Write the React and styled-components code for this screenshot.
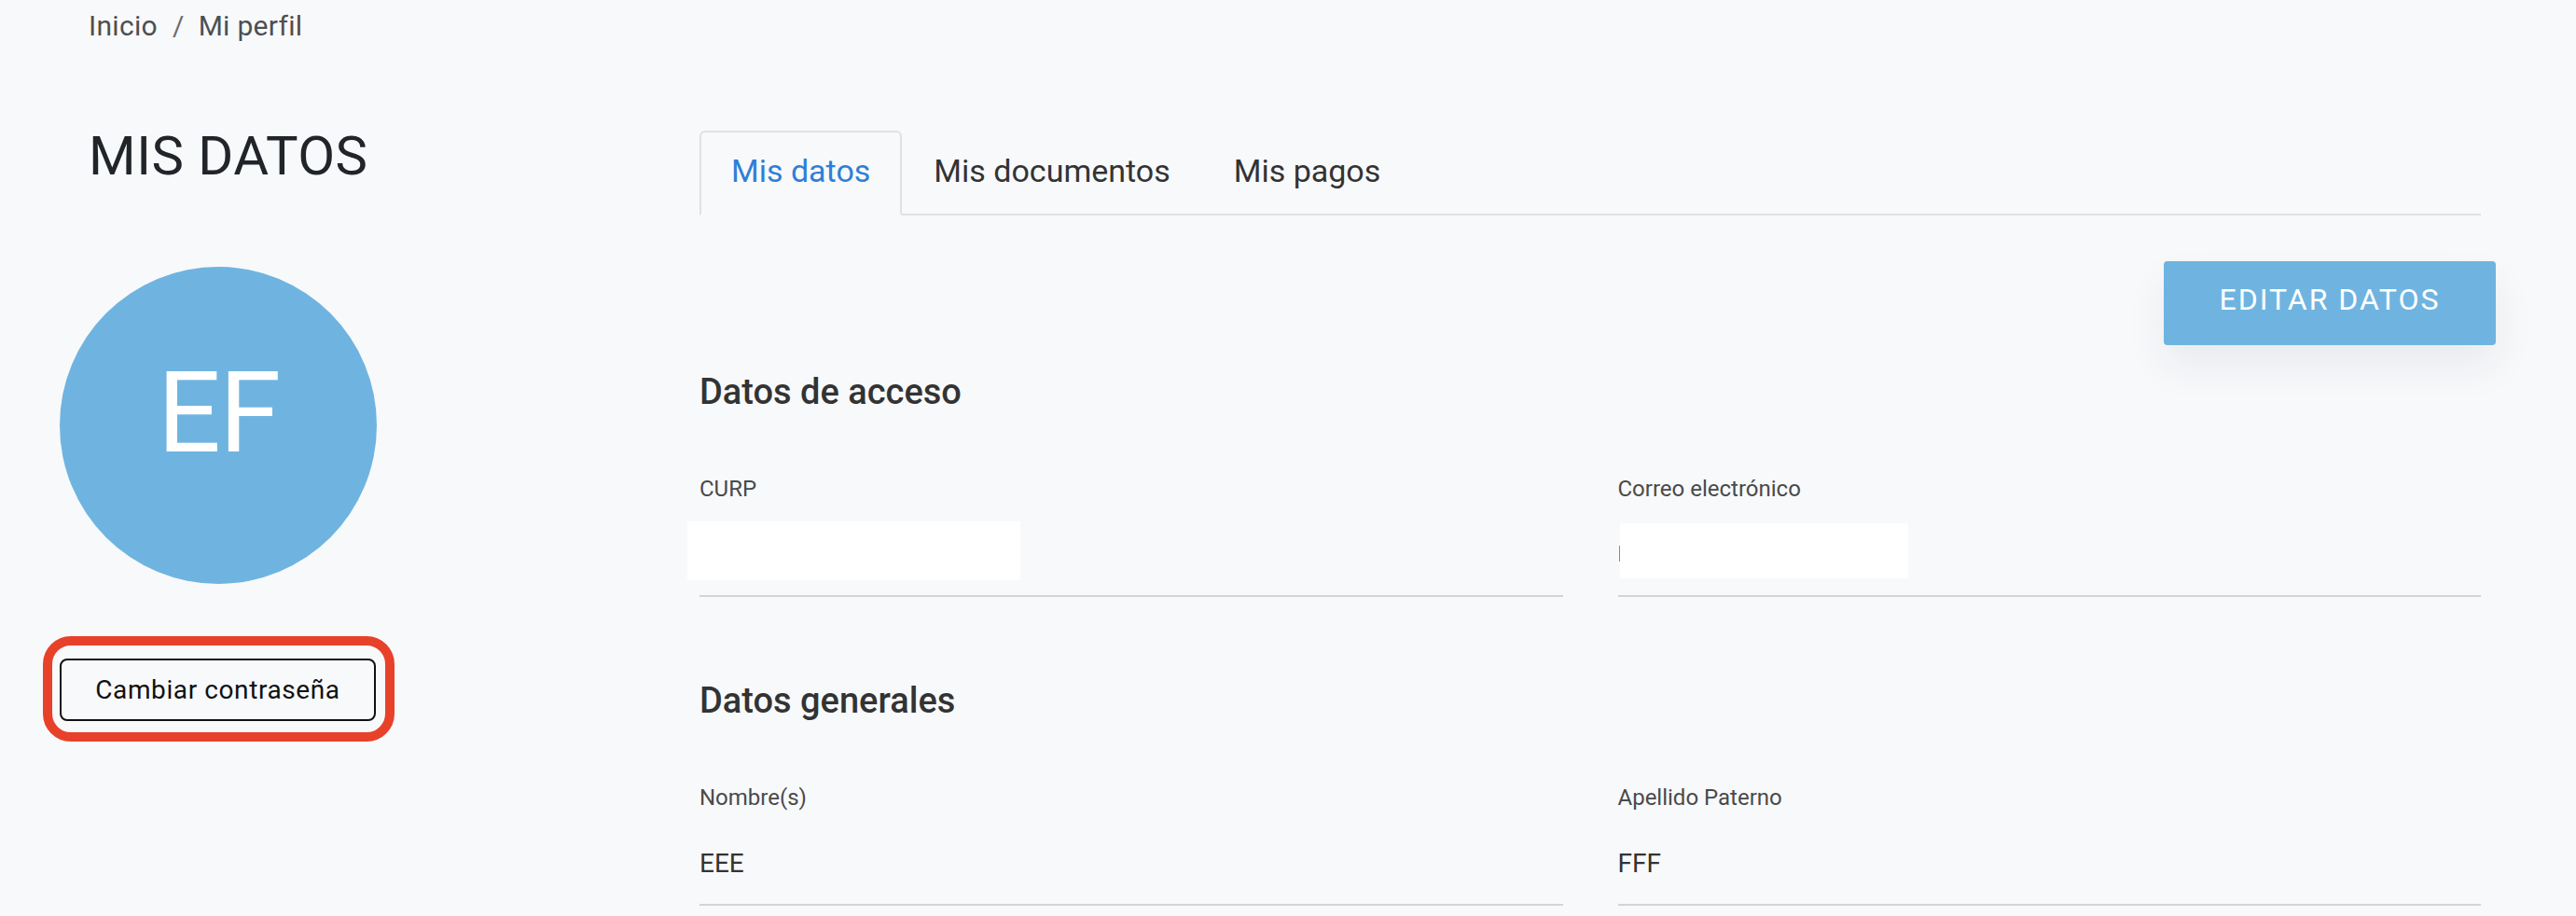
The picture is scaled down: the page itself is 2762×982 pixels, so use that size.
import React from "react";
import styled, { createGlobalStyle } from "styled-components";

const GlobalStyle = createGlobalStyle`
  html, body {
    margin: 0;
    padding: 0;
    background: #f8f9fb;
  }
  body {
    font-family: Roboto, "Noto Sans", "Liberation Sans", Arial, sans-serif;
    color: #333;
  }
  *, *::before, *::after { box-sizing: border-box; }
`;

const Page = styled.div`
  min-height: 982px;
  background: #f8f9fb;
  overflow: hidden;
`;

const Breadcrumb = styled.nav`
  display: flex;
  align-items: baseline;
  padding: 10px 0 0 95px;
  font-size: 30px;
  line-height: 36px;
  letter-spacing: 0.3px;
  color: #4d4f52;
`;

const Crumb = styled.span``;

const CrumbSep = styled.span`
  margin: 0 15px 0 16px;
  color: #6b6e72;
`;

const Layout = styled.div`
  display: grid;
  grid-template-columns: 340px 1fr;
  column-gap: 346px;
  padding: 0 102px 0 64px;
  margin-top: 86px;
`;

const Sidebar = styled.aside`
  display: flex;
  flex-direction: column;
  align-items: flex-start;
`;

const PageTitle = styled.h1`
  margin: 0;
  padding-left: 31px;
  font-size: 58px;
  line-height: 70px;
  font-weight: 400;
  letter-spacing: 0.5px;
  color: #212529;
`;

const Avatar = styled.div`
  margin-top: 84px;
  width: 340px;
  height: 340px;
  border-radius: 50%;
  background: #6fb4e0;
  color: #fff;
  display: flex;
  align-items: center;
  justify-content: center;
  font-size: 120px;
  line-height: 1;
  padding-bottom: 27px;
  letter-spacing: -2px;
`;

const HighlightWrap = styled.div`
  position: relative;
  margin-top: 80px;
  width: 340px;
`;

const Highlight = styled.span`
  position: absolute;
  top: -24px;
  bottom: -22px;
  left: -18px;
  right: -19px;
  border: 10px solid #e8412a;
  border-radius: 30px;
  pointer-events: none;
`;

const OutlineButton = styled.button`
  display: block;
  width: 339px;
  height: 67px;
  border: 2px solid #111;
  border-radius: 8px;
  background: transparent;
  font-family: inherit;
  font-size: 28px;
  letter-spacing: 0.6px;
  color: #111;
  padding: 0;
`;

const Main = styled.main`
  padding-top: 8px;
  min-width: 0;
`;

const TabBar = styled.div`
  display: flex;
  height: 91px;
  border-bottom: 2px solid #dee2e6;
`;

const Tab = styled.button`
  height: 91px;
  padding: 0 32px 5px;
  border: 2px solid ${(p) => (p.$active ? "#dee2e6" : "transparent")};
  border-bottom-color: transparent;
  border-radius: 6px 6px 0 0;
  background: ${(p) => (p.$active ? "#f8f9fb" : "transparent")};
  font-family: inherit;
  font-size: 34px;
  line-height: 34px;
  color: ${(p) => (p.$active ? "#2f7fd6" : "#333")};
`;

const ActionRow = styled.div`
  display: flex;
  justify-content: flex-end;
  margin: 49px -16px 0 0;
`;

const PrimaryButton = styled.button`
  width: 356px;
  height: 90px;
  border: none;
  border-radius: 4px;
  background: #6fb4e0;
  color: #fff;
  font-family: inherit;
  font-size: 32px;
  letter-spacing: 2px;
  padding: 0 0 8px;
  box-shadow: 0 22px 44px rgba(30, 40, 60, 0.07);
`;

const Section = styled.section`
  margin-top: 27px;
  & + & {
    margin-top: 88px;
  }
`;

const SectionTitle = styled.h2`
  margin: 0;
  font-size: 38px;
  line-height: 46px;
  font-weight: 500;
  color: #333;
`;

const FieldGrid = styled.div`
  display: grid;
  grid-template-columns: 1fr 1fr;
  column-gap: 59px;
  margin-top: 66px;
`;

const Field = styled.div`
  padding-bottom: 25px;
  border-bottom: 2px solid #d3d4d6;
`;

const FieldLabel = styled.div`
  font-size: 24px;
  line-height: 30px;
  color: #4a4a4a;
`;

const FieldValue = styled.div`
  position: relative;
  margin-top: 38px;
  min-height: 36px;
  font-size: 28px;
  line-height: 36px;
  color: #333;
`;

const Redaction = styled.span`
  position: absolute;
  top: ${(p) => p.$top}px;
  left: ${(p) => p.$left}px;
  width: ${(p) => p.$w}px;
  height: ${(p) => p.$h}px;
  background: #ffffff;
`;

const Sliver = styled.span`
  position: absolute;
  left: 1px;
  top: 8px;
  width: 2px;
  height: 17px;
  background: #8a8a8a;
`;

export default function App() {
  return (
    <Page>
      <GlobalStyle />
      <Breadcrumb>
        <Crumb>Inicio</Crumb>
        <CrumbSep>/</CrumbSep>
        <Crumb>Mi perfil</Crumb>
      </Breadcrumb>
      <Layout>
        <Sidebar>
          <PageTitle>MIS DATOS</PageTitle>
          <Avatar>EF</Avatar>
          <HighlightWrap>
            <OutlineButton>Cambiar contraseña</OutlineButton>
            <Highlight />
          </HighlightWrap>
        </Sidebar>
        <Main>
          <TabBar>
            <Tab $active>Mis datos</Tab>
            <Tab>Mis documentos</Tab>
            <Tab>Mis pagos</Tab>
          </TabBar>
          <ActionRow>
            <PrimaryButton>EDITAR DATOS</PrimaryButton>
          </ActionRow>
          <Section>
            <SectionTitle>Datos de acceso</SectionTitle>
            <FieldGrid>
              <Field>
                <FieldLabel>CURP</FieldLabel>
                <FieldValue>
                  &nbsp;
                  <Redaction $top={-18} $left={-13} $w={357} $h={63} />
                </FieldValue>
              </Field>
              <Field>
                <FieldLabel>Correo electrónico</FieldLabel>
                <FieldValue>
                  &nbsp;
                  <Sliver />
                  <Redaction $top={-16} $left={2} $w={309} $h={59} />
                </FieldValue>
              </Field>
            </FieldGrid>
          </Section>
          <Section>
            <SectionTitle>Datos generales</SectionTitle>
            <FieldGrid>
              <Field>
                <FieldLabel>Nombre(s)</FieldLabel>
                <FieldValue>EEE</FieldValue>
              </Field>
              <Field>
                <FieldLabel>Apellido Paterno</FieldLabel>
                <FieldValue>FFF</FieldValue>
              </Field>
            </FieldGrid>
          </Section>
        </Main>
      </Layout>
    </Page>
  );
}
